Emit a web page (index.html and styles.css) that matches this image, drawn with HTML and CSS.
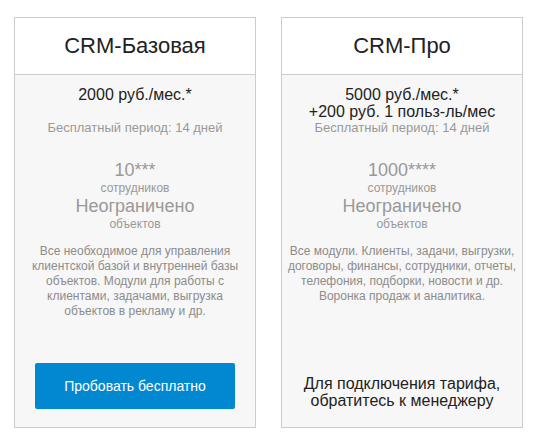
FILE: index.html
```html
<!DOCTYPE html>
<html lang="ru">
<head>
<meta charset="utf-8">
<title>Тарифы</title>
<link rel="stylesheet" href="styles.css">
</head>
<body>
<div class="plans">
  <div class="card">
    <div class="card-head">CRM-Базовая</div>
    <div class="card-body">
      <div class="price">2000 руб./мес.*<br>&nbsp;</div>
      <div class="trial">Бесплатный период: 14 дней</div>
      <div class="count">10***</div>
      <div class="unit">сотрудников</div>
      <div class="count">Неограничено</div>
      <div class="unit">объектов</div>
      <div class="desc">Все необходимое для управления клиентской базой и внутренней базы объектов. Модули для работы с клиентами, задачами, выгрузка объектов в рекламу и др.</div>
      <div class="footer">
        <a class="btn" href="#">Пробовать бесплатно</a>
      </div>
    </div>
  </div>
  <div class="card">
    <div class="card-head">CRM-Про</div>
    <div class="card-body">
      <div class="price">5000 руб./мес.*<br>+200 руб. 1 польз-ль/мес</div>
      <div class="trial">Бесплатный период: 14 дней</div>
      <div class="count">1000****</div>
      <div class="unit">сотрудников</div>
      <div class="count">Неограничено</div>
      <div class="unit">объектов</div>
      <div class="desc">Все модули. Клиенты, задачи, выгрузки, договоры, финансы, сотрудники, отчеты, телефония, подборки, новости и др. Воронка продаж и аналитика.</div>
      <div class="footer">
        <div class="contact">Для подключения тарифа,<br>обратитесь к менеджеру</div>
      </div>
    </div>
  </div>
</div>
</body>
</html>
```

FILE: styles.css
```css
html, body {
  margin: 0;
  padding: 0;
  background: #fff;
  font-family: "Liberation Sans", Arial, sans-serif;
}

.plans {
  display: flex;
  gap: 25px;
  padding: 17px 0 0 14px;
}

.card {
  box-sizing: border-box;
  width: 242px;
  height: 411px;
  border: 1px solid #cccccc;
  display: flex;
  flex-direction: column;
  background: #f7f7f7;
  text-align: center;
}

.card-head {
  background: #fff;
  border-bottom: 1px solid #cccccc;
  font-size: 22px;
  line-height: 26px;
  padding: 15px 0;
  color: #222;
}

.card-body {
  flex: 1;
  display: flex;
  flex-direction: column;
  padding: 11px 5px 18px;
}

.price {
  font-size: 16px;
  line-height: 17px;
  color: #222;
}

.trial {
  font-size: 13px;
  line-height: 16px;
  color: #999;
}

.count {
  font-size: 18px;
  line-height: 20px;
  color: #999;
}

.trial + .count {
  margin-top: 24px;
}

.unit {
  font-size: 12px;
  line-height: 16px;
  color: #999;
}

.desc {
  margin-top: 12px;
  font-size: 12px;
  line-height: 15px;
  color: #8c8c8c;
}

.footer {
  margin-top: auto;
  display: flex;
  justify-content: center;
}

.btn {
  width: 200px;
  height: 46px;
  display: flex;
  align-items: center;
  justify-content: center;
  background: #0288d1;
  color: #fff;
  border-radius: 2px;
  font-size: 14px;
  text-decoration: none;
}

.contact {
  font-size: 16px;
  line-height: 17px;
  color: #222;
}
```
